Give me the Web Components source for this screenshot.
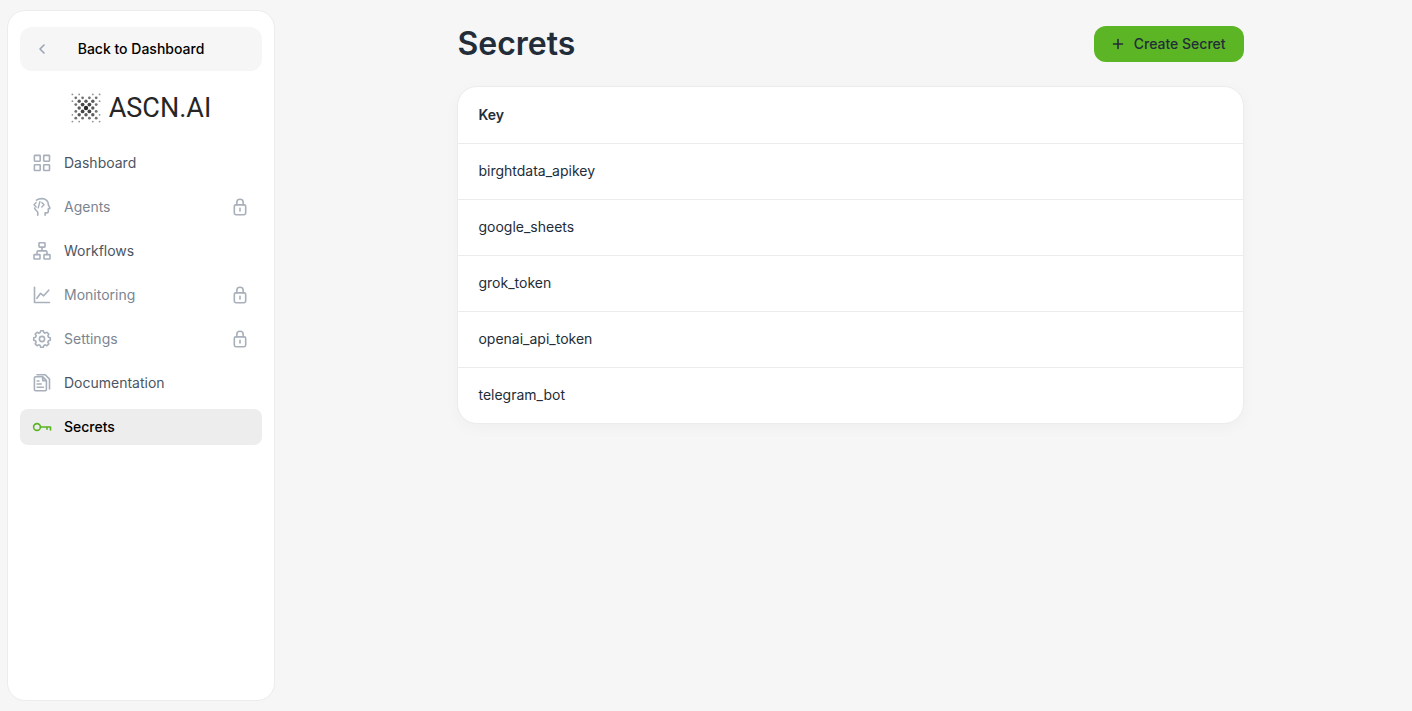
<!DOCTYPE html>
<html lang="en">
<head>
<meta charset="utf-8">
<title>Secrets</title>
<style>
body { margin: 0; background: #f6f6f6; color: #232d39; font: 14px/20px Inter, "Liberation Sans", sans-serif; }
</style>
</head>
<body>
<app-shell>
  <side-bar slot="side">
    <back-link slot="top" href="#dashboard">Back to Dashboard</back-link>
    <brand-logo slot="top">ASCN.AI</brand-logo>
    <nav-item icon="grid">Dashboard</nav-item>
    <nav-item icon="agent" locked>Agents</nav-item>
    <nav-item icon="flow">Workflows</nav-item>
    <nav-item icon="chart" locked>Monitoring</nav-item>
    <nav-item icon="gear" locked>Settings</nav-item>
    <nav-item icon="docs">Documentation</nav-item>
    <nav-item icon="key" active>Secrets</nav-item>
  </side-bar>
  <page-header heading="Secrets"><create-button>Create Secret</create-button></page-header>
  <secrets-table keys="birghtdata_apikey google_sheets grok_token openai_api_token telegram_bot"></secrets-table>
</app-shell>
<script>
const define = (name, render) => customElements.define(name, class extends HTMLElement {
  constructor() {
    super();
    this.attachShadow({ mode: 'open' }).innerHTML = '<style>*{box-sizing:border-box}</style>' + render(this);
  }
});

const svg = (body, size = 20) =>
  `<svg width="${size}" height="${size}" viewBox="0 0 ${size} ${size}" fill="none" stroke="currentColor" stroke-width="1.6" stroke-linecap="round" stroke-linejoin="round" aria-hidden="true">${body}</svg>`;

// Outline of an eight-toothed cog, alternating between two radii
const cog = (() => {
  const pts = [];
  for (let i = 0; i < 8; i++) {
    for (const [off, r] of [[-16, 6.7], [-9, 8.4], [9, 8.4], [16, 6.7]]) {
      const a = (i * 45 + off) * Math.PI / 180;
      pts.push((10 + r * Math.sin(a)).toFixed(2) + ' ' + (10 - r * Math.cos(a)).toFixed(2));
    }
  }
  return 'M' + pts.join('L') + 'Z';
})();

const icons = {
  grid: svg('<rect x="2.400" y="2.400" width="5.800" height="5.800" rx=".6"/><rect x="11.700" y="2.400" width="5.800" height="5.800" rx=".6"/><rect x="2.400" y="11.700" width="5.800" height="5.800" rx=".6"/><rect x="11.700" y="11.700" width="5.800" height="5.800" rx=".6"/>'),
  agent: svg('<path d="M4.500 3.200C6.200 1.900 8 1.600 9.800 1.600c4 0 6.600 2.700 6.600 6.300l1.400 2.900c.2.500 0 .8-.5.900l-1 .2v2.500c0 1-.6 1.500-1.500 1.500h-1.700v2.300M5.800 18.300v-2.600c0-1.500-2.600-2.300-3.200-4.600"/><path stroke-width="1.400" d="M4.200 5.600L2 7.800l2.200 2.200M9.800 5.600l2.200 2.200-2.200 2.200M7.900 4.700l-1.700 6.200"/>'),
  flow: svg('<rect x="7" y="1.700" width="6" height="4.400" rx=".6"/><rect x="2" y="13.600" width="6" height="4.400" rx=".6"/><rect x="12" y="13.600" width="6" height="4.400" rx=".6"/><path d="M10 6.200v3.700M5 13.500v-2.200c0-.9.500-1.400 1.400-1.400h7.200c.9 0 1.400.5 1.400 1.400v2.200"/>'),
  chart: svg('<path d="M2.500 2.200v15.300h15M4.900 13.300l3.700-5 3.100 2.500 5-5.600"/>'),
  gear: svg(`<path d="${cog}"/><circle cx="10" cy="10" r="2.600"/>`),
  docs: svg('<path d="M3.600 3.800h7.200l3.600 3.700v9c0 .7-.5 1.200-1.200 1.200H3.600c-.7 0-1.200-.5-1.200-1.200V5c0-.7.500-1.200 1.200-1.200zM10.700 4v3.600h3.500M5.200 8h1.800M5.200 11h4M5.200 14.300h6.200"/><path d="M5 1.800h8.200l4.300 4.300v9.800"/>'),
  key: svg('<circle cx="5" cy="10" r="3.400"/><path d="M8.500 10h10v3M15 10v2.200"/>'),
  lock: svg('<rect x="4.300" y="7.900" width="11.400" height="9.800" rx="1.600"/><path d="M6.800 7.700V5.500a3.200 3.200 0 0 1 6.400 0v2.200M10 11.400v2.700"/>')
};

define('app-shell', () => `
  <style>
    :host { display: flex; min-height: 100vh; }
    aside { flex: 0 0 268px; padding: 10px 0; margin-left: 7px; display: flex; }
    main { flex: 1; margin-left: 14px; padding-top: 24px; display: flex; flex-direction: column; align-items: center; gap: 22px; }
    main ::slotted(*) { width: 70%; }
  </style>
  <aside><slot name="side"></slot></aside>
  <main><slot></slot></main>`);

define('side-bar', () => `
  <style>
    :host { flex: 1; display: block; box-sizing: border-box; background: #fff; border: 1px solid #ececec; border-radius: 18px; padding: 16px 12px; }
    nav { display: flex; flex-direction: column; gap: 8px; }
  </style>
  <slot name="top"></slot>
  <nav aria-label="Main"><slot></slot></nav>`);

define('back-link', el => `
  <style>
    :host { display: block; }
    a { display: grid; grid-template-columns: 20px 1fr 20px; align-items: center; height: 44px; padding: 0 12px; border-radius: 12px; background: #f6f6f6; color: #000; text-align: center; text-decoration: none; font-weight: 500; }
    svg { color: #9aa5b4; }
  </style>
  <a href="${el.getAttribute('href')}">${svg('<path d="M12 6l-4 4 4 4"/>')}<span><slot></slot></span></a>`);

define('brand-logo', () => {
  // Checkerboard of dots that shrink and fade away from the centre
  const unit = 3.4;
  let dots = '';
  for (let y = -4; y <= 4; y++) {
    for (let x = -4; x <= 4; x++) {
      const ax = Math.abs(x), ay = Math.abs(y), d = Math.max(ax, ay);
      if ((ax + ay) % 2 || Math.abs(ax - ay) > 2) continue;
      const r = [2.2, 1.9, 1.7, 1.4, .9][d];
      const alpha = [1, .85, .75, .65, .5][d];
      dots += `<circle cx="${15 + x * unit}" cy="${15 + y * unit}" r="${r}" opacity="${alpha}"/>`;
    }
  }
  return `
  <style>
    :host { display: flex; justify-content: center; align-items: center; gap: 8px; height: 74px; color: #262626; font-family: Roboto, sans-serif; font-size: 27px; line-height: 32px; }
  </style>
  <svg width="30" height="30" viewBox="0 0 30 30" fill="currentColor" aria-hidden="true">${dots}</svg>
  <span><slot></slot></span>`;
});

define('nav-item', el => `
  <style>
    :host { display: block; }
    a { display: flex; align-items: center; gap: 12px; height: 36px; padding: 0 12px; border-radius: 8px; color: #4b5563; text-decoration: none; }
    span { flex: 1; }
    svg { color: #a8b0bb; }
    :host([locked]) a { color: #7b8591; }
    :host([active]) a { background: #ededed; color: #000; font-weight: 500; }
    :host([active]) svg { color: #5ab324; }
  </style>
  <a href="#${el.getAttribute('icon')}"${el.hasAttribute('active') ? ' aria-current="page"' : ''}>${icons[el.getAttribute('icon')]}<span><slot></slot></span>${el.hasAttribute('locked') ? icons.lock : ''}</a>`);

define('page-header', el => `
  <style>
    :host { display: flex; justify-content: space-between; align-items: center; }
    h1 { margin: 0; font-size: 32px; line-height: 40px; font-weight: 600; }
  </style>
  <h1>${el.getAttribute('heading')}</h1><slot></slot>`);

define('create-button', () => `
  <style>
    button { display: flex; align-items: center; gap: 8px; height: 36px; padding: 0 18px 0 16px; border: 0; border-radius: 12px; background: #5cb524; color: #232d39; font: inherit; font-weight: 500; }
  </style>
  <button type="button">${svg('<path d="M8 3.500v9M3.500 8h9"/>', 16)}<span><slot></slot></span></button>`);

define('secrets-table', el => `
  <style>
    :host { display: block; box-sizing: border-box; background: #fff; border: 1px solid #ececec; border-radius: 20px; box-shadow: 0 4px 16px rgba(0, 0, 0, .03); }
    table { width: 100%; border-collapse: collapse; }
    th, td { height: 56px; padding: 0 20px; text-align: left; }
    th { font-weight: 600; }
    td { border-top: 1px solid #ececec; }
  </style>
  <table>
    <thead><tr><th scope="col">Key</th></tr></thead>
    <tbody>${el.getAttribute('keys').split(' ').map(k => `<tr><td>${k}</td></tr>`).join('')}</tbody>
  </table>`);
</script>
</body>
</html>
